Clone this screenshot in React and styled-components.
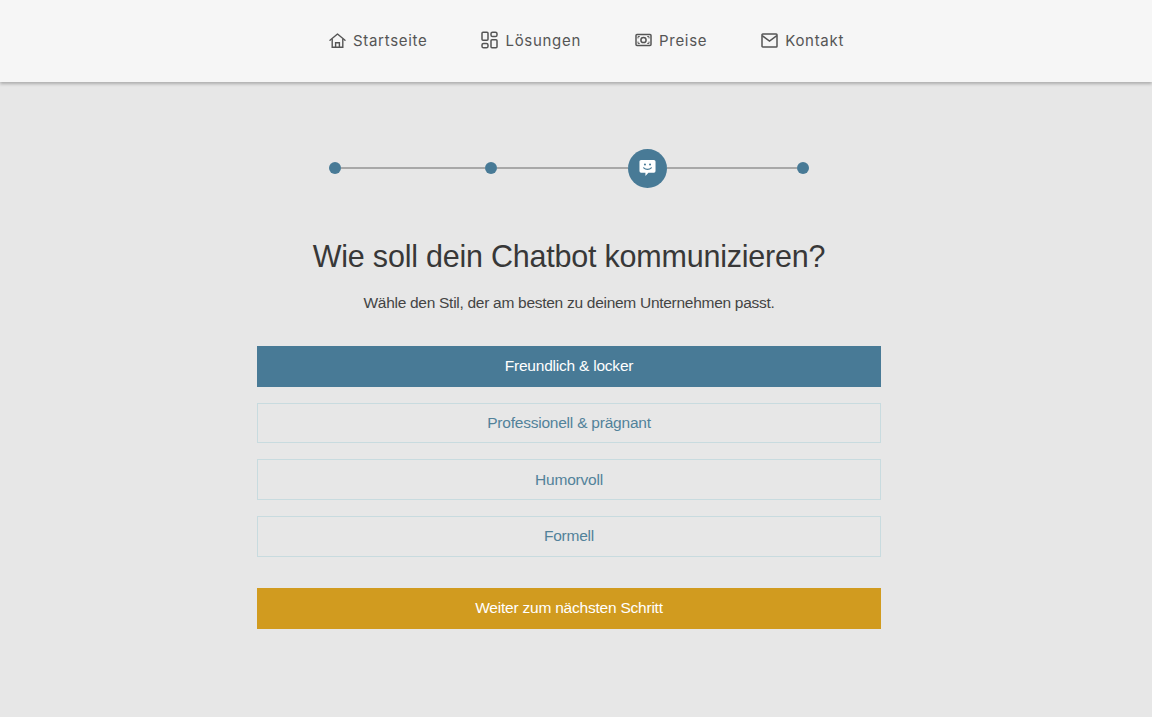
import React from "react";
import styled, { createGlobalStyle } from "styled-components";

const GlobalStyle = createGlobalStyle`
	html, body {
		margin: 0;
		padding: 0;
		background: #e7e7e7;
		font-family: "Liberation Sans", Arial, sans-serif;
	}
`;

function HomeIcon() {
	return (
		<svg width="17" height="17" viewBox="0 0 17 17" fill="none" stroke="currentColor" strokeWidth="1.4">
			<path d="M1 8.2 8.5 2l7.5 6.2" strokeLinecap="round" strokeLinejoin="round" />
			<path d="M3.2 7v8.3h10.6V7" />
			<path d="M6.6 15.3v-4.6h3.8v4.6" />
		</svg>
	);
}

function SolutionsIcon() {
	return (
		<svg width="17" height="18" viewBox="0 0 17 18" fill="none" stroke="currentColor" strokeWidth="1.5">
			<rect x="1" y="1.2" width="6" height="8" rx="1" />
			<rect x="10" y="1.2" width="6" height="4.4" rx="1.6" />
			<rect x="1" y="12.4" width="6" height="4.4" rx="1.6" />
			<rect x="10" y="8.8" width="6" height="8" rx="1" />
		</svg>
	);
}

function MoneyIcon() {
	return (
		<svg width="17" height="14" viewBox="0 0 17 14" fill="none" stroke="currentColor" strokeWidth="1.5">
			<rect x="1" y="1.5" width="15" height="11" rx="1" />
			<circle cx="8.5" cy="7" r="2.6" />
			<path d="M3 5.4V3.6h1.8M14 8.6v1.8h-1.8M3 8.6v1.8h1.8M14 5.4V3.6h-1.8" strokeWidth="1" />
		</svg>
	);
}

function MailIcon() {
	return (
		<svg width="17" height="15" viewBox="0 0 17 15" fill="none" stroke="currentColor" strokeWidth="1.5">
			<rect x="1" y="1" width="15" height="13" rx="0.8" />
			<path d="M1.2 2.6 8.5 8l7.3-5.4" />
		</svg>
	);
}

function ChatIcon() {
	return (
		<svg width="17" height="18" viewBox="0 0 18 19">
			<path
				fill="#fff"
				d="M2.2 1h13.6A1.7 1.7 0 0 1 17.500 2.700v10.100a1.700 1.700 0 0 1-1.700 1.700H10L6.800 18v-3.500H2.200A1.700 1.700 0 0 1 .5 12.800V2.700A1.700 1.700 0 0 1 2.200 1z"
			/>
			<circle cx="6.3" cy="5.800" r="1.100" fill="#487a96" />
			<circle cx="11.700" cy="5.800" r="1.100" fill="#487a96" />
			<path d="M5 9.300c2 2.200 6 2.200 8 0" fill="none" stroke="#487a96" strokeWidth="1.300" strokeLinecap="round" />
		</svg>
	);
}

const NAV_ITEMS = [
	{ label: "Startseite", icon: <HomeIcon /> },
	{ label: "Lösungen", icon: <SolutionsIcon /> },
	{ label: "Preise", icon: <MoneyIcon /> },
	{ label: "Kontakt", icon: <MailIcon /> },
];

const OPTIONS = [
	"Freundlich & locker",
	"Professionell & prägnant",
	"Humorvoll",
	"Formell",
];

const App = () => {
	return (
		<Page>
			<GlobalStyle />
			<Header>
				<Nav>
					{NAV_ITEMS.map((item) => (
						<NavItem key={item.label}>
							{item.icon}
							<span>{item.label}</span>
						</NavItem>
					))}
				</Nav>
			</Header>

			<Main>
				<Stepper>
					<Dot />
					<Line $width={144} />
					<Dot />
					<Line $width={131} />
					<ActiveStep>
						<ChatIcon />
					</ActiveStep>
					<Line $width={130} />
					<Dot />
				</Stepper>

				<Title>Wie soll dein Chatbot kommunizieren?</Title>
				<Subtitle>Wähle den Stil, der am besten zu deinem Unternehmen passt.</Subtitle>

				<Options>
					{OPTIONS.map((option, index) => (
						<OptionButton key={option} $selected={index === 0}>
							{option}
						</OptionButton>
					))}
				</Options>

				<NextButton>Weiter zum nächsten Schritt</NextButton>
			</Main>
		</Page>
	);
};

const Page = styled.div`
	min-height: 717px;
	background: #e7e7e7;
`;

const Header = styled.header`
	height: 82px;
	background: #f6f6f6;
	box-shadow: 0 2px 3px rgba(0, 0, 0, 0.25);
	display: flex;
	justify-content: center;
	padding-left: 21px;
`;

const Nav = styled.nav`
	display: flex;
	gap: 54px;
	height: 80px;
	align-items: center;
`;

const NavItem = styled.a`
	display: flex;
	align-items: center;
	gap: 7px;
	color: #555;
	font-family: Inter, sans-serif;
	font-size: 15px;
	letter-spacing: 0.7px;
`;

const Main = styled.main`
	width: 624px;
	margin-left: 257px;
	display: flex;
	flex-direction: column;
	align-items: center;
`;

const Stepper = styled.div`
	height: 40px;
	margin-top: 66px;
	display: flex;
	align-items: center;
`;

const Dot = styled.span`
	width: 12px;
	height: 12px;
	border-radius: 50%;
	background: #487a96;
	flex: none;
`;

const Line = styled.span`
	width: ${(p) => p.$width}px;
	height: 2px;
	background: #a8a8a8;
`;

const ActiveStep = styled.span`
	width: 39px;
	height: 39px;
	border-radius: 50%;
	background: #487a96;
	flex: none;
	display: flex;
	align-items: center;
	justify-content: center;
`;

const Title = styled.h1`
	margin: 48px 0 0;
	font-size: 30.5px;
	line-height: 40px;
	font-weight: 400;
	letter-spacing: -0.22px;
	color: #383838;
`;

const Subtitle = styled.p`
	margin: 15px 0 0;
	font-size: 15.5px;
	line-height: 24px;
	letter-spacing: -0.28px;
	color: #444;
`;

const Options = styled.div`
	width: 100%;
	margin-top: 31px;
	display: flex;
	flex-direction: column;
	gap: 16px;
`;

const OptionButton = styled.div`
	height: 40.67px;
	box-sizing: border-box;
	display: flex;
	align-items: center;
	justify-content: center;
	font-size: 15.5px;
	letter-spacing: -0.22px;
	border: 1px solid ${(p) => (p.$selected ? "#487a96" : "#c8dbdf")};
	background: ${(p) => (p.$selected ? "#487a96" : "transparent")};
	color: ${(p) => (p.$selected ? "#fff" : "#52829a")};
`;

const NextButton = styled.div`
	width: 100%;
	height: 41px;
	margin-top: 31px;
	background: #d19b1f;
	color: #fff;
	font-size: 15.5px;
	letter-spacing: -0.22px;
	display: flex;
	align-items: center;
	justify-content: center;
`;

export default App;
